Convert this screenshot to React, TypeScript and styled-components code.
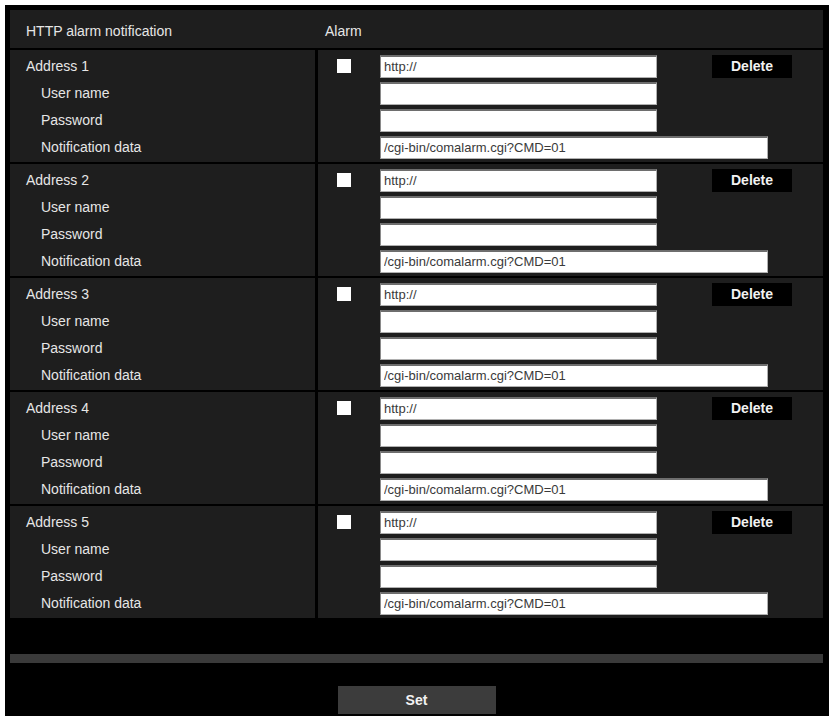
import { FC } from "react";
import styled, { createGlobalStyle } from "styled-components";

const GlobalStyle = createGlobalStyle`
  html, body {
    margin: 0;
    padding: 0;
    background: #fff;
  }
  * {
    box-sizing: border-box;
  }
`;

const Frame = styled.div`
  width: 824px;
  margin: 5px 0 0 5px;
  padding: 5px 6px 2px 5px;
  background-color: #000;
  font-family: "Liberation Sans", Arial, sans-serif;
  color: #e6e6e6;
`;

const Panel = styled.div`
  background-color: #1e1e1e;
`;

const Header = styled.div`
  display: flex;
  align-items: center;
  height: 40px;
  padding-top: 3px;
  border-bottom: 2px solid #000;
  font-size: 14px;
`;

const HeaderCell = styled.div<{ $width?: number; $pad: number }>`
  width: ${(p) => (p.$width ? `${p.$width}px` : "auto")};
  padding-left: ${(p) => p.$pad}px;
`;

const Block = styled.div<{ $last?: boolean }>`
  display: flex;
  border-bottom: ${(p) => (p.$last ? "none" : "2px solid #000")};
`;

const LabelCol = styled.div`
  width: 308px;
  border-right: 3px solid #000;
  padding: 5px 0 4px 16px;
  display: flex;
  flex-direction: column;
  gap: 5px;
`;

const Label = styled.div<{ $sub?: boolean }>`
  height: 22px;
  line-height: 23px;
  font-size: 14px;
  padding-left: ${(p) => (p.$sub ? 15 : 0)}px;
`;

const FieldCol = styled.div`
  flex: 1;
  padding: 5px 0 4px 0;
  display: flex;
  flex-direction: column;
  gap: 5px;
`;

const Row = styled.div`
  display: flex;
  align-items: center;
  height: 22px;
`;

const CheckCell = styled.div`
  width: 62px;
  display: flex;
  align-items: center;
`;

const Check = styled.input`
  appearance: none;
  margin: 0 0 0 19px;
  width: 14px;
  height: 14px;
  background: #fff;
  border: none;
`;

const TextInput = styled.input<{ $width: number }>`
  width: ${(p) => p.$width}px;
  height: 23px;
  margin: 0;
  padding: 0 3px;
  background: #fff;
  border: 1px solid #b0b0b0;
  border-top: 2px solid #6e6e6e;
  border-left-color: #8a8a8a;
  font-family: "Liberation Sans", Arial, sans-serif;
  font-size: 13px;
  color: #3a3a3a;
  outline: none;
`;

const DeleteButton = styled.button`
  margin-left: 55px;
  width: 80px;
  height: 23px;
  background: #000;
  border: none;
  color: #f2f2f2;
  font-family: "Liberation Sans", Arial, sans-serif;
  font-size: 14px;
  font-weight: bold;
`;

const Gap = styled.div`
  height: 36px;
`;

const Band = styled.div`
  height: 9px;
  background-color: #3a3a3a;
`;

const Footer = styled.div`
  display: flex;
  justify-content: center;
  padding-top: 23px;
`;

const SetButton = styled.button`
  width: 158px;
  height: 28px;
  background: #3c3c3c;
  border: none;
  color: #f2f2f2;
  font-family: "Liberation Sans", Arial, sans-serif;
  font-size: 14px;
  font-weight: bold;
`;

const AddressBlock: FC<{ index: number; last?: boolean }> = ({ index, last }) => (
  <Block $last={last}>
    <LabelCol>
      <Label>Address {index}</Label>
      <Label $sub>User name</Label>
      <Label $sub>Password</Label>
      <Label $sub>Notification data</Label>
    </LabelCol>
    <FieldCol>
      <Row>
        <CheckCell>
          <Check type="checkbox" />
        </CheckCell>
        <TextInput $width={277} defaultValue="http://" />
        <DeleteButton>Delete</DeleteButton>
      </Row>
      <Row>
        <CheckCell />
        <TextInput $width={277} />
      </Row>
      <Row>
        <CheckCell />
        <TextInput $width={277} type="password" />
      </Row>
      <Row>
        <CheckCell />
        <TextInput $width={388} defaultValue="/cgi-bin/comalarm.cgi?CMD=01" />
      </Row>
    </FieldCol>
  </Block>
);

const App: FC = () => {
  const addresses = [1, 2, 3, 4, 5];
  return (
    <>
      <GlobalStyle />
      <Frame>
        <Panel>
          <Header>
            <HeaderCell $width={311} $pad={16}>
              HTTP alarm notification
            </HeaderCell>
            <HeaderCell $pad={4}>Alarm</HeaderCell>
          </Header>
          {addresses.map((n) => (
            <AddressBlock key={n} index={n} last={n === addresses.length} />
          ))}
        </Panel>
        <Gap />
        <Band />
        <Footer>
          <SetButton>Set</SetButton>
        </Footer>
      </Frame>
    </>
  );
};

export default App;
